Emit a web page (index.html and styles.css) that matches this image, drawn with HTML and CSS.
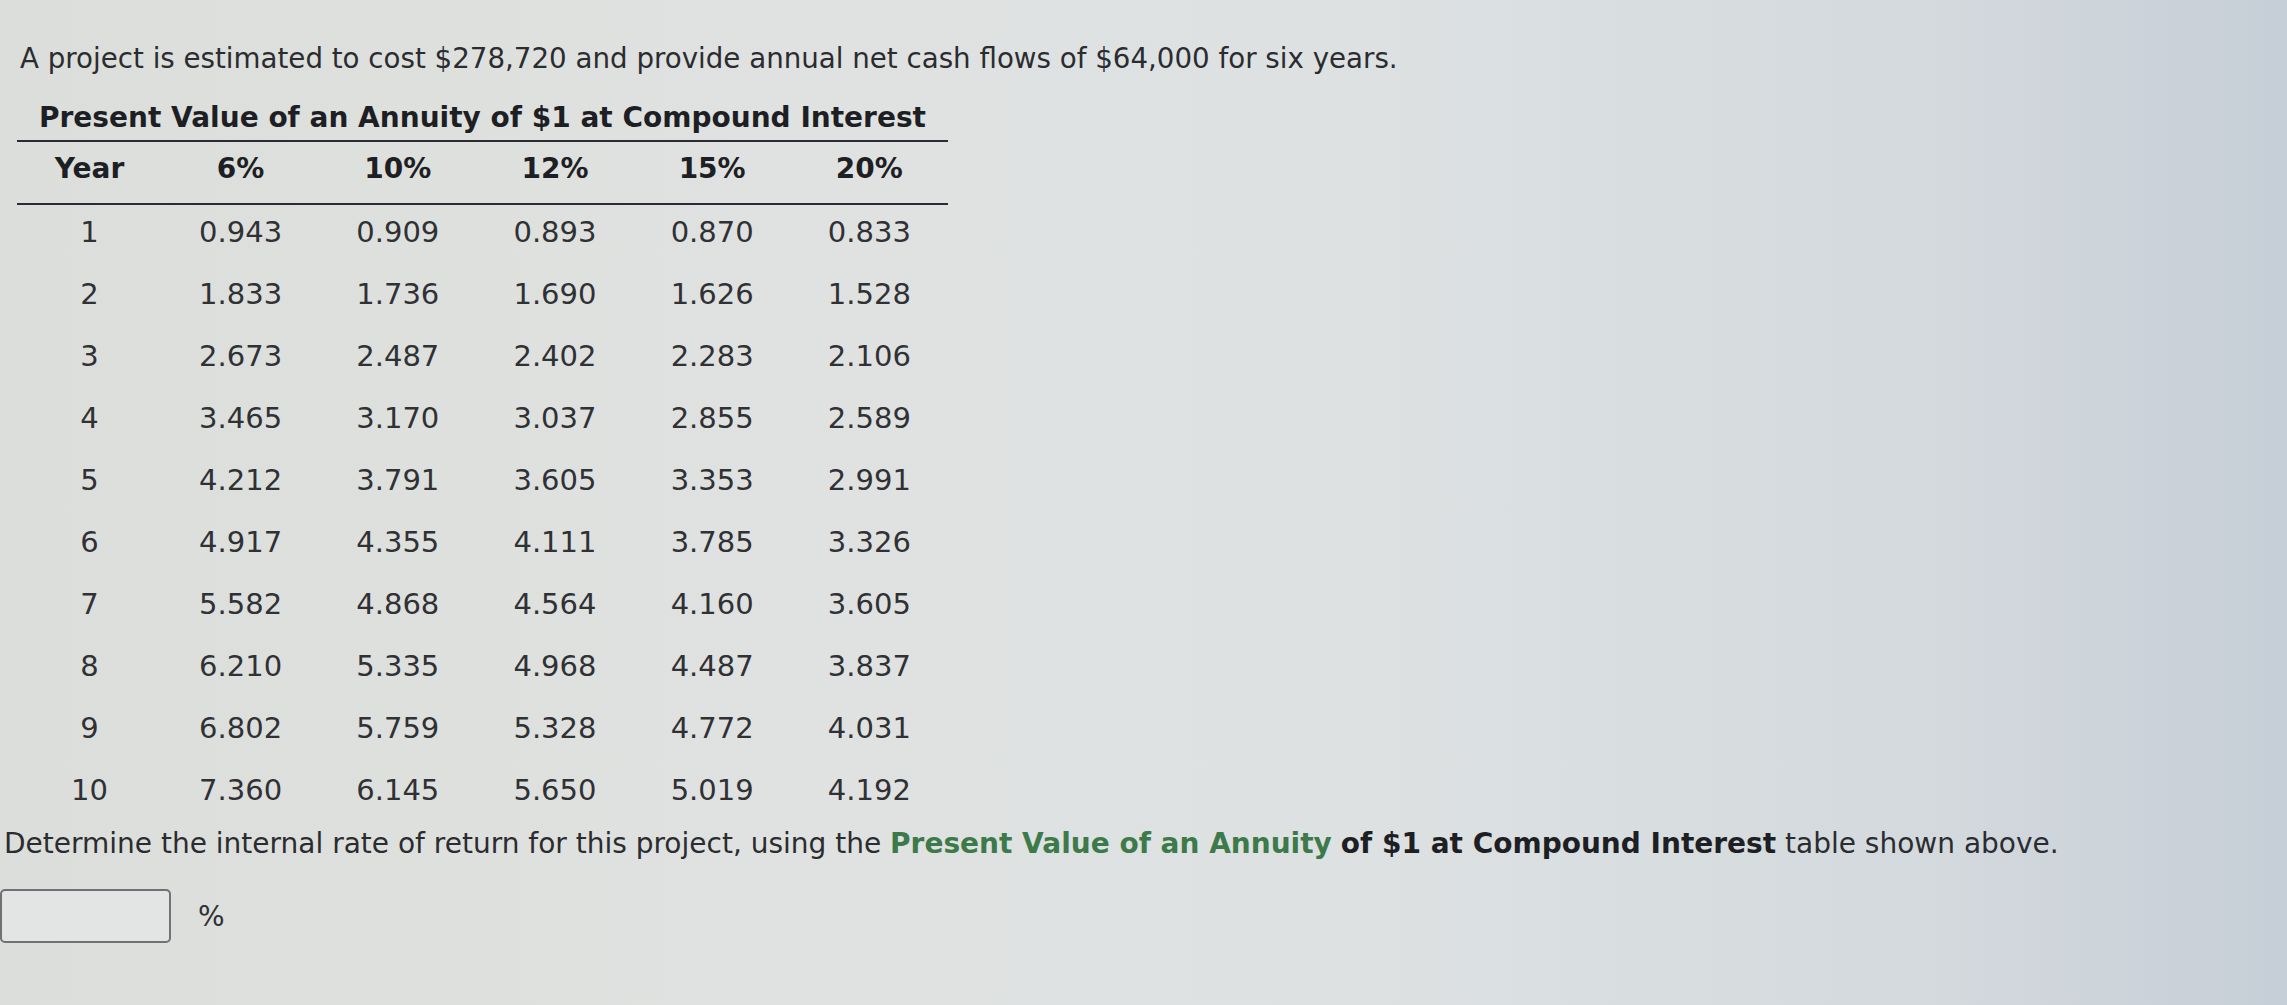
FILE: index.html
```html
<!DOCTYPE html>
<html lang="en">
<head>
<meta charset="utf-8">
<title>Present Value of an Annuity</title>
<link rel="stylesheet" href="styles.css">
</head>
<body>
<main class="page">
  <p class="intro">A project is estimated to cost $278,720 and provide annual net cash flows of $64,000 for six years.</p>
  <table class="pv">
    <colgroup>
      <col class="col-year">
      <col class="col-rate" span="5">
    </colgroup>
    <thead>
      <tr class="title-row"><th colspan="6">Present Value of an Annuity of $1 at Compound Interest</th></tr>
      <tr class="head-row"><th>Year</th><th>6%</th><th>10%</th><th>12%</th><th>15%</th><th>20%</th></tr>
    </thead>
    <tbody>
      <tr><td>1</td><td>0.943</td><td>0.909</td><td>0.893</td><td>0.870</td><td>0.833</td></tr>
      <tr><td>2</td><td>1.833</td><td>1.736</td><td>1.690</td><td>1.626</td><td>1.528</td></tr>
      <tr><td>3</td><td>2.673</td><td>2.487</td><td>2.402</td><td>2.283</td><td>2.106</td></tr>
      <tr><td>4</td><td>3.465</td><td>3.170</td><td>3.037</td><td>2.855</td><td>2.589</td></tr>
      <tr><td>5</td><td>4.212</td><td>3.791</td><td>3.605</td><td>3.353</td><td>2.991</td></tr>
      <tr><td>6</td><td>4.917</td><td>4.355</td><td>4.111</td><td>3.785</td><td>3.326</td></tr>
      <tr><td>7</td><td>5.582</td><td>4.868</td><td>4.564</td><td>4.160</td><td>3.605</td></tr>
      <tr><td>8</td><td>6.210</td><td>5.335</td><td>4.968</td><td>4.487</td><td>3.837</td></tr>
      <tr><td>9</td><td>6.802</td><td>5.759</td><td>5.328</td><td>4.772</td><td>4.031</td></tr>
      <tr><td>10</td><td>7.360</td><td>6.145</td><td>5.650</td><td>5.019</td><td>4.192</td></tr>
    </tbody>
  </table>
  <p class="question">Determine the internal rate of return for this project, using the <strong class="link">Present Value of an Annuity</strong> <strong>of $1 at Compound Interest</strong> table shown above.</p>
  <div class="answer">
    <input class="answer-box" type="text" aria-label="Internal rate of return">
    <span class="unit">%</span>
  </div>
</main>
</body>
</html>
```

FILE: styles.css
```css
html, body {
  margin: 0;
  padding: 0;
}

body {
  width: 2287px;
  height: 1005px;
  overflow: hidden;
  background: linear-gradient(90deg, #dcdedb 0%, #e0e2e1 35%, #dde1e2 60%, #d3d9dd 85%, #c6ced7 100%);
  font-family: "DejaVu Sans", Verdana, sans-serif;
  color: #2b2c30;
}

.page {
  padding-top: 42px;
}

.intro {
  margin: 0 0 0 20px;
  font-size: 27.7px;
  line-height: 34px;
  white-space: nowrap;
}

.pv {
  margin: 0 0 0 17px;
  border-collapse: collapse;
  width: 931px;
  table-layout: fixed;
  font-size: 28px;
}

.col-year {
  width: 145px;
}

.pv th,
.pv td {
  padding: 0;
  text-align: center;
}

.pv th {
  color: #1e1f24;
  font-weight: bold;
}

.title-row th {
  height: 59px;
  padding-bottom: 5px;
  vertical-align: bottom;
  line-height: 34px;
  border-bottom: 2px solid #2b2b33;
  white-space: nowrap;
}

.head-row th {
  height: 52px;
  padding-bottom: 9px;
  border-bottom: 2px solid #2b2b33;
}

.pv td {
  height: 54px;
  padding-bottom: 8px;
  font-size: 29px;
  color: #303135;
}

.question {
  margin: 2px 0 0 4px;
  font-size: 28px;
  line-height: 34px;
  white-space: nowrap;
}

.question strong {
  color: #1e1f24;
}

.question .link {
  color: #3d7a4a;
}

.answer {
  display: flex;
  align-items: center;
  gap: 27px;
  margin-top: 28px;
}

.answer-box {
  width: 171px;
  height: 54px;
  box-sizing: border-box;
  margin: 0;
  border: 2px solid #6f7174;
  border-radius: 5px;
  background: #e3e5e4;
}

.unit {
  font-size: 28px;
  color: #303135;
}
```
